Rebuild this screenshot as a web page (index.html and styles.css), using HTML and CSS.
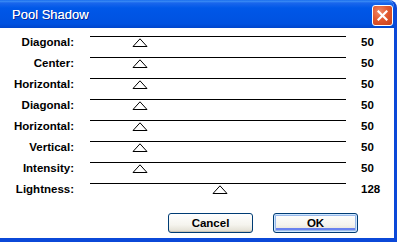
FILE: index.html
```html
<!DOCTYPE html>
<html lang="en">

<head>
    <meta charset="UTF-8">
    <meta name="viewport" content="width=device-width, initial-scale=1.0">
    <title>Pool Shadow</title>
    <link rel="stylesheet" href="styles.css">
</head>

<body>

    <div class="window">
        <div class="titlebar">
            <span class="title">Pool Shadow</span>
            <button class="close" aria-label="Close">
                <svg width="11" height="11" viewBox="0 0 11 11">
                    <path d="M1.5 1.5 L9.5 9.5 M9.5 1.5 L1.5 9.5" stroke="#fff" stroke-width="2.2" stroke-linecap="square" />
                </svg>
            </button>
        </div>

        <div class="content">
            <div class="rows">
                <div class="row">
                    <span class="label">Diagonal:</span>
                    <div class="track"><svg class="thumb" style="left: 50px" viewBox="0 0 16 9"><path d="M8 0.8 L15 8.5 L1 8.5 Z" /></svg></div>
                    <span class="value">50</span>
                </div>
                <div class="row">
                    <span class="label">Center:</span>
                    <div class="track"><svg class="thumb" style="left: 50px" viewBox="0 0 16 9"><path d="M8 0.8 L15 8.5 L1 8.5 Z" /></svg></div>
                    <span class="value">50</span>
                </div>
                <div class="row">
                    <span class="label">Horizontal:</span>
                    <div class="track"><svg class="thumb" style="left: 50px" viewBox="0 0 16 9"><path d="M8 0.8 L15 8.5 L1 8.5 Z" /></svg></div>
                    <span class="value">50</span>
                </div>
                <div class="row">
                    <span class="label">Diagonal:</span>
                    <div class="track"><svg class="thumb" style="left: 50px" viewBox="0 0 16 9"><path d="M8 0.8 L15 8.5 L1 8.5 Z" /></svg></div>
                    <span class="value">50</span>
                </div>
                <div class="row">
                    <span class="label">Horizontal:</span>
                    <div class="track"><svg class="thumb" style="left: 50px" viewBox="0 0 16 9"><path d="M8 0.8 L15 8.5 L1 8.5 Z" /></svg></div>
                    <span class="value">50</span>
                </div>
                <div class="row">
                    <span class="label">Vertical:</span>
                    <div class="track"><svg class="thumb" style="left: 50px" viewBox="0 0 16 9"><path d="M8 0.8 L15 8.5 L1 8.5 Z" /></svg></div>
                    <span class="value">50</span>
                </div>
                <div class="row">
                    <span class="label">Intensity:</span>
                    <div class="track"><svg class="thumb" style="left: 50px" viewBox="0 0 16 9"><path d="M8 0.8 L15 8.5 L1 8.5 Z" /></svg></div>
                    <span class="value">50</span>
                </div>
                <div class="row">
                    <span class="label">Lightness:</span>
                    <div class="track"><svg class="thumb" style="left: 130px" viewBox="0 0 16 9"><path d="M8 0.8 L15 8.5 L1 8.5 Z" /></svg></div>
                    <span class="value">128</span>
                </div>
            </div>

            <div class="buttons">
                <button class="btn">Cancel</button>
                <button class="btn btn-default">OK</button>
            </div>
        </div>
    </div>

</body>

</html>
```

FILE: styles.css
```css
* {
    margin: 0;
    padding: 0;
    box-sizing: border-box;
}

html,
body {
    width: 100%;
    height: 100%;
    background-color: #ffffff;
}

.window {
    width: 397px;
    height: 242px;
    display: flex;
    flex-direction: column;
    background-color: #ffffff;
    border-right: 3px solid #0b48d8;
    border-bottom: 4px solid #0b48d8;
    border-top-right-radius: 8px;
    overflow: hidden;
}

/* barra de titulo estilo XP */
.titlebar {
    height: 28px;
    flex-shrink: 0;
    display: flex;
    align-items: center;
    justify-content: space-between;
    padding-left: 12px;
    padding-right: 1px;
    background: linear-gradient(to bottom, #0a5ee8 0, #3d8ff6 1px, #1a66ec 3px, #0058e8 8px, #0055e5 50%, #0052e0 85%, #0046cc 100%);
}

.title {
    font-family: "Liberation Sans", Arial, sans-serif;
    font-size: 13px;
    color: #ffffff;
    text-shadow: 1px 1px 0 #0a2a9a, 0 0 0.5px #ffffff;
    margin-top: 1px;
}

.close {
    width: 21px;
    height: 21px;
    margin-top: 2px;
    border: 1px solid #ffffff;
    border-radius: 3px;
    background: radial-gradient(circle at 35% 30%, #ef8a6a 0, #e2592f 45%, #c7401a 100%);
    display: flex;
    align-items: center;
    justify-content: center;
}

.content {
    flex: 1;
    padding-top: 8px;
    font-family: "Liberation Sans", Arial, sans-serif;
    font-size: 11.5px;
    font-weight: bold;
    color: #000000;
}

.row {
    height: 21px;
    display: flex;
    align-items: flex-start;
    line-height: 13px;
}

.label {
    width: 74px;
    text-align: right;
}

.track {
    position: relative;
    width: 256px;
    height: 10px;
    margin-left: 16px;
    border-top: 1px solid #000000;
}

.thumb {
    position: absolute;
    top: 1px;
    width: 16px;
    height: 9px;
    transform: translateX(-50%);
    fill: #ffffff;
    stroke: #000000;
    stroke-width: 1;
}

.value {
    margin-left: 15px;
}

.buttons {
    display: flex;
    justify-content: flex-end;
    gap: 20px;
    padding-right: 36px;
    margin-top: 9px;
}

.btn {
    width: 85px;
    height: 20px;
    font-family: "Liberation Sans", Arial, sans-serif;
    font-size: 11.5px;
    font-weight: bold;
    color: #000000;
    border: 1px solid #003c74;
    border-radius: 3px;
    background: linear-gradient(to bottom, #ffffff 0, #f5f4ee 60%, #e6e3d8 90%, #d6d0c5 100%);
    box-shadow: inset 0 -1px 0 #c9c5b8;
}

.btn-default {
    box-shadow: inset 0 0 0 1px #cee7ff, inset 0 0 0 2px #98b8ea, inset 0 -2px 0 2px #6982ee;
}
```
